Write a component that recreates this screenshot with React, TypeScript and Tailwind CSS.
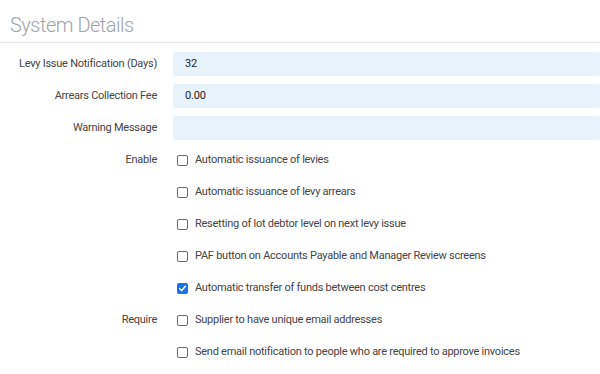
import React from "react";

const font = { fontFamily: "Roboto, 'Noto Sans', sans-serif" };

function Check({ checked }: { checked?: boolean }) {
  if (checked) {
    return (
      <span className="flex h-[11px] w-[11px] items-center justify-center rounded-[2px] bg-[#1a73e8]">
        <svg width="9" height="9" viewBox="0 0 10 10">
          <path d="M2 5.2 L4.2 7.3 L8.2 2.6" fill="none" stroke="white" strokeWidth="1.7" strokeLinecap="round" strokeLinejoin="round" />
        </svg>
      </span>
    );
  }
  return <span className="block h-[11px] w-[11px] rounded-[2px] border border-[#6b6b6b] bg-white" />;
}

function InputRow({ label, value }: { label: string; value: string }) {
  return (
    <div className="flex h-8 items-center">
      <div className="w-[158px] shrink-0 pr-px text-right text-[11px] tracking-[-0.25px] text-[#444]">{label}</div>
      <div className="ml-[15px] flex h-6 flex-1 items-center rounded-[3px] bg-[#e8f2fa] pl-3 text-[11px] tracking-[-0.2px] text-[#222]">
        {value}
      </div>
    </div>
  );
}

function CheckRow({ label, text, checked }: { label?: string; text: string; checked?: boolean }) {
  return (
    <div className="flex h-8 items-center">
      <div className="w-[158px] shrink-0 pr-px text-right text-[11px] tracking-[-0.25px] text-[#444]">{label ?? ""}</div>
      <div className="ml-[19px] flex items-center">
        <Check checked={checked} />
        <span className="ml-[7px] text-[11px] tracking-[-0.25px] text-[#444]">{text}</span>
      </div>
    </div>
  );
}

export default function App() {
  return (
    <div className="h-[374px] w-[600px] overflow-hidden bg-white" style={font}>
      <div className="h-[43px] border-b border-[#e6e6e6] pl-[10px] pt-[13px] text-[20px] font-light leading-[24px] tracking-[-0.5px] text-[#9ea3a8]">
        System Details
      </div>
      <div className="pt-[5px]">
        <InputRow label="Levy Issue Notification (Days)" value="32" />
        <InputRow label="Arrears Collection Fee" value="0.00" />
        <InputRow label="Warning Message" value="" />
        <CheckRow label="Enable" text="Automatic issuance of levies" />
        <CheckRow text="Automatic issuance of levy arrears" />
        <CheckRow text="Resetting of lot debtor level on next levy issue" />
        <CheckRow text="PAF button on Accounts Payable and Manager Review screens" />
        <CheckRow text="Automatic transfer of funds between cost centres" checked />
        <CheckRow label="Require" text="Supplier to have unique email addresses" />
        <CheckRow text="Send email notification to people who are required to approve invoices" />
      </div>
    </div>
  );
}
